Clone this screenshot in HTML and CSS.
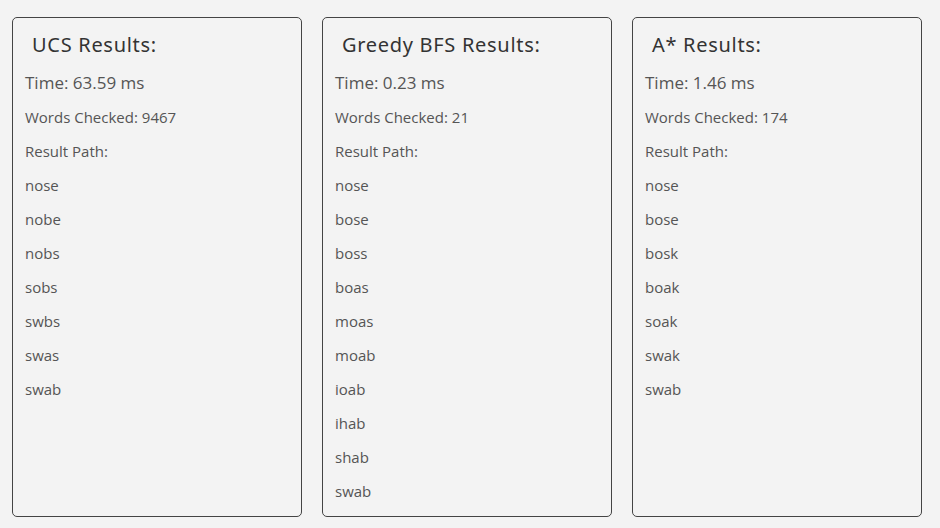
FILE: index.html
```html
<!DOCTYPE html>
<html>
<head>
<meta charset="utf-8">
<link rel="stylesheet" href="styles.css">
</head>
<body>
<div class="results">
  <section class="card">
    <h2 class="card-title">UCS Results:</h2>
    <div class="time">Time: 63.59 ms</div>
    <div class="row">Words Checked: 9467</div>
    <div class="row">Result Path:</div>
    <div class="row">nose</div>
    <div class="row">nobe</div>
    <div class="row">nobs</div>
    <div class="row">sobs</div>
    <div class="row">swbs</div>
    <div class="row">swas</div>
    <div class="row">swab</div>
  </section>
  <section class="card">
    <h2 class="card-title">Greedy BFS Results:</h2>
    <div class="time">Time: 0.23 ms</div>
    <div class="row">Words Checked: 21</div>
    <div class="row">Result Path:</div>
    <div class="row">nose</div>
    <div class="row">bose</div>
    <div class="row">boss</div>
    <div class="row">boas</div>
    <div class="row">moas</div>
    <div class="row">moab</div>
    <div class="row">ioab</div>
    <div class="row">ihab</div>
    <div class="row">shab</div>
    <div class="row">swab</div>
  </section>
  <section class="card">
    <h2 class="card-title">A* Results:</h2>
    <div class="time">Time: 1.46 ms</div>
    <div class="row">Words Checked: 174</div>
    <div class="row">Result Path:</div>
    <div class="row">nose</div>
    <div class="row">bose</div>
    <div class="row">bosk</div>
    <div class="row">boak</div>
    <div class="row">soak</div>
    <div class="row">swak</div>
    <div class="row">swab</div>
  </section>
</div>
</body>
</html>
```

FILE: styles.css
```css
html, body {
  margin: 0;
  background: #f3f3f3;
}
.results {
  display: flex;
  gap: 20px;
  padding: 17px 18px 0 12px;
  font-family: "Open Sans", "Noto Sans", sans-serif;
  color: #555;
}
.card {
  flex: 0 0 290px;
  box-sizing: border-box;
  height: 500px;
  border: 1px solid #444;
  border-radius: 5px;
  padding: 8px 12px 8px 12px;
  background: #f3f3f3;
}
.card-title {
  margin: 0 0 2px 0;
  padding-left: 7px;
  height: 38px;
  line-height: 38px;
  font-family: "Noto Sans", sans-serif;
  font-weight: 400;
  font-size: 20px;
  letter-spacing: 0.7px;
  color: #333;
}
.time {
  height: 34px;
  line-height: 34px;
  font-size: 17px;
}
.row {
  height: 34px;
  line-height: 34px;
  font-size: 15px;
}
```
